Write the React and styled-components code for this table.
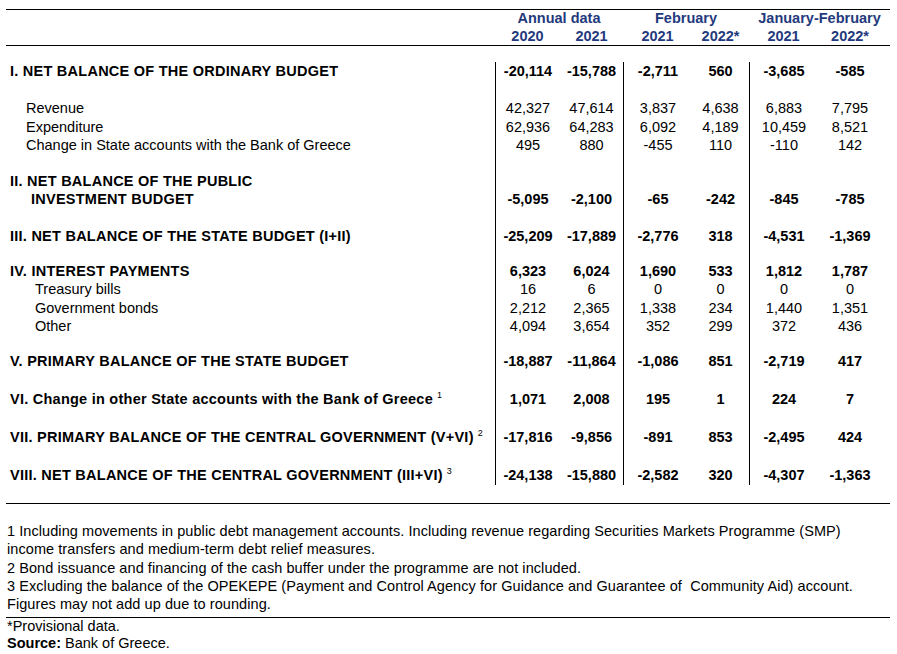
import React from "react"
import styled, { createGlobalStyle } from "styled-components"

const GlobalStyle = createGlobalStyle`
  body {
    margin: 0;
    background: #fff;
    font-family: "Liberation Sans", Arial, sans-serif;
    color: #000;
  }
`

const rows = [
  { label: ["I. NET BALANCE OF THE ORDINARY BUDGET"], bold: true, space: 0,
    values: ["-20,114", "-15,788", "-2,711", "560", "-3,685", "-585"] },
  { label: ["Revenue"], indent: 16, space: 19,
    values: ["42,327", "47,614", "3,837", "4,638", "6,883", "7,795"] },
  { label: ["Expenditure"], indent: 16, space: 0,
    values: ["62,936", "64,283", "6,092", "4,189", "10,459", "8,521"] },
  { label: ["Change in State accounts with the Bank of Greece"], indent: 16, space: 0,
    values: ["495", "880", "-455", "110", "-110", "142"] },
  { label: ["II. NET BALANCE OF THE PUBLIC", "INVESTMENT BUDGET"], bold: true, space: 17.5,
    values: ["-5,095", "-2,100", "-65", "-242", "-845", "-785"] },
  { label: ["III. NET BALANCE OF THE STATE BUDGET (I+II)"], bold: true, space: 19,
    values: ["-25,209", "-17,889", "-2,776", "318", "-4,531", "-1,369"] },
  { label: ["IV. INTEREST PAYMENTS"], bold: true, space: 17,
    values: ["6,323", "6,024", "1,690", "533", "1,812", "1,787"] },
  { label: ["Treasury bills"], indent: 25, space: 0,
    values: ["16", "6", "0", "0", "0", "0"] },
  { label: ["Government bonds"], indent: 25, space: 0,
    values: ["2,212", "2,365", "1,338", "234", "1,440", "1,351"] },
  { label: ["Other"], indent: 25, space: 0,
    values: ["4,094", "3,654", "352", "299", "372", "436"] },
  { label: ["V. PRIMARY BALANCE OF THE STATE BUDGET"], bold: true, space: 16.5,
    values: ["-18,887", "-11,864", "-1,086", "851", "-2,719", "417"] },
  { label: ["VI. Change in other State accounts with the Bank of Greece"], note: "1", bold: true, space: 20,
    values: ["1,071", "2,008", "195", "1", "224", "7"] },
  { label: ["VII. PRIMARY BALANCE OF THE CENTRAL GOVERNMENT (V+VI)"], note: "2", bold: true, space: 20,
    values: ["-17,816", "-9,856", "-891", "853", "-2,495", "424"] },
  { label: ["VIII. NET BALANCE OF THE CENTRAL GOVERNMENT (III+VI)"], note: "3", bold: true, space: 20,
    values: ["-24,138", "-15,880", "-2,582", "320", "-4,307", "-1,363"] },
]

const colWidths = [489, 65, 63, 69, 57, 69, 72]

export default function App() {
  return (
    <Page>
      <GlobalStyle />
      <Table>
        <colgroup>
          {colWidths.map((w, i) => <col key={i} style={{ width: w }} />)}
        </colgroup>
        <thead>
          <tr>
            <HeadCell $top $h={17} />
            <HeadCell $top $h={17} colSpan={2}>Annual data</HeadCell>
            <HeadCell $top $h={17} colSpan={2}>February</HeadCell>
            <HeadCell $top $h={17} colSpan={2}>January-February</HeadCell>
          </tr>
          <tr>
            <HeadCell $bottom $h={18} />
            <HeadCell $bottom $h={18}>2020</HeadCell>
            <HeadCell $bottom $h={18}>2021</HeadCell>
            <HeadCell $bottom $h={18}>2021</HeadCell>
            <HeadCell $bottom $h={18}>2022*</HeadCell>
            <HeadCell $bottom $h={18}>2021</HeadCell>
            <HeadCell $bottom $h={18} $last>2022*</HeadCell>
          </tr>
        </thead>
        <tbody>
          <tr><Gap colSpan={7} $h={16} /></tr>
          {rows.map((r, i) => (
            <tr key={i}>
              <Label $bold={r.bold} $indent={r.indent} $space={r.space}>
                {r.label.map((line, j) => (
                  <LabelLine key={j} $wrap={j > 0} $sub={!r.bold}>
                    {line}
                    {r.note && <Sup>{r.note}</Sup>}
                  </LabelLine>
                ))}
              </Label>
              {r.values.map((v, j) => (
                <Num key={j} $bold={r.bold} $space={r.space} $rule={j % 2 === 0} $last={j === 5} $sub={!r.bold}>
                  {v}
                </Num>
              ))}
            </tr>
          ))}
          <tr>
            <Label $space={0} $h={1} />
            {[0, 1, 2, 3, 4, 5].map((j) => <Num key={j} $space={0} $h={1} $rule={j % 2 === 0} />)}
          </tr>
          <tr><Gap colSpan={7} $h={18} $line /></tr>
        </tbody>
      </Table>

      <Notes>
        <Note>1 Including movements in public debt management accounts. Including revenue regarding Securities Markets Programme (SMP)</Note>
        <Note>income transfers and medium-term debt relief measures.</Note>
        <Note>2 Bond issuance and financing of the cash buffer under the programme are not included.</Note>
        <Note>3 Excluding the balance of the OPEKEPE (Payment and Control Agency for Guidance and Guarantee of&nbsp; Community Aid) account.</Note>
        <Note>Figures may not add up due to rounding.</Note>
      </Notes>
      <Source>
        <SourceLine>*Provisional data.</SourceLine>
        <SourceLine><b>Source:</b> Bank of Greece.</SourceLine>
      </Source>
    </Page>
  )
}

const Page = styled.div`
  width: 884px;
  padding: 9px 0 0 6px;
  font-size: 14.5px;
`

const Table = styled.table`
  width: 884px;
  table-layout: fixed;
  border-spacing: 0;
  border-collapse: separate;
`

const HeadCell = styled.th`
  padding: 0 ${(p) => (p.$last ? "8px" : "0")} 0 0;
  height: ${(p) => p.$h}px;
  line-height: ${(p) => p.$h}px;
  font-weight: 700;
  color: #1f3a7d;
  text-align: center;
  white-space: nowrap;
  border-top: ${(p) => (p.$top ? "1px solid #000" : "none")};
  border-bottom: ${(p) => (p.$bottom ? "1px solid #000" : "none")};
`

const Gap = styled.td`
  padding: 0;
  height: ${(p) => p.$h}px;
  border-bottom: ${(p) => (p.$line ? "1px solid #000" : "none")};
`

const Label = styled.td`
  padding: ${(p) => p.$space}px 0 0 ${(p) => 4 + (p.$indent || 0)}px;
  height: ${(p) => p.$h ?? 0}px;
  vertical-align: bottom;
  font-weight: ${(p) => (p.$bold ? 700 : 400)};
  letter-spacing: ${(p) => (p.$bold ? "0.25px" : "0")};
  white-space: nowrap;
`

const LabelLine = styled.div`
  line-height: ${(p) => (p.$sub ? "18.5px" : "18px")};
  padding-left: ${(p) => (p.$wrap ? "21px" : "0")};
`

const Sup = styled.sup`
  font-size: 9px;
  font-weight: 400;
  vertical-align: 6px;
  line-height: 0;
  margin-left: 4px;
`

const Num = styled.td`
  padding: ${(p) => p.$space}px ${(p) => (p.$last ? "8px" : "0")} 0 0;
  height: ${(p) => p.$h ?? 0}px;
  line-height: ${(p) => (p.$h ? `${p.$h}px` : p.$sub ? "18.5px" : "18px")};
  vertical-align: bottom;
  text-align: center;
  white-space: nowrap;
  font-weight: ${(p) => (p.$bold ? 700 : 400)};
  border-left: ${(p) => (p.$rule ? "1px solid #000" : "none")};
`

const Notes = styled.div`
  margin-top: 18px;
  padding-left: 1px;
  padding-bottom: 4px;
  border-bottom: 1px solid #000;
  letter-spacing: 0.07px;
`

const Note = styled.div`
  line-height: 18.25px;
  white-space: nowrap;
`

const Source = styled.div`
  padding: 0 0 0 1px;
`

const SourceLine = styled.div`
  line-height: 17px;
  white-space: nowrap;
`
